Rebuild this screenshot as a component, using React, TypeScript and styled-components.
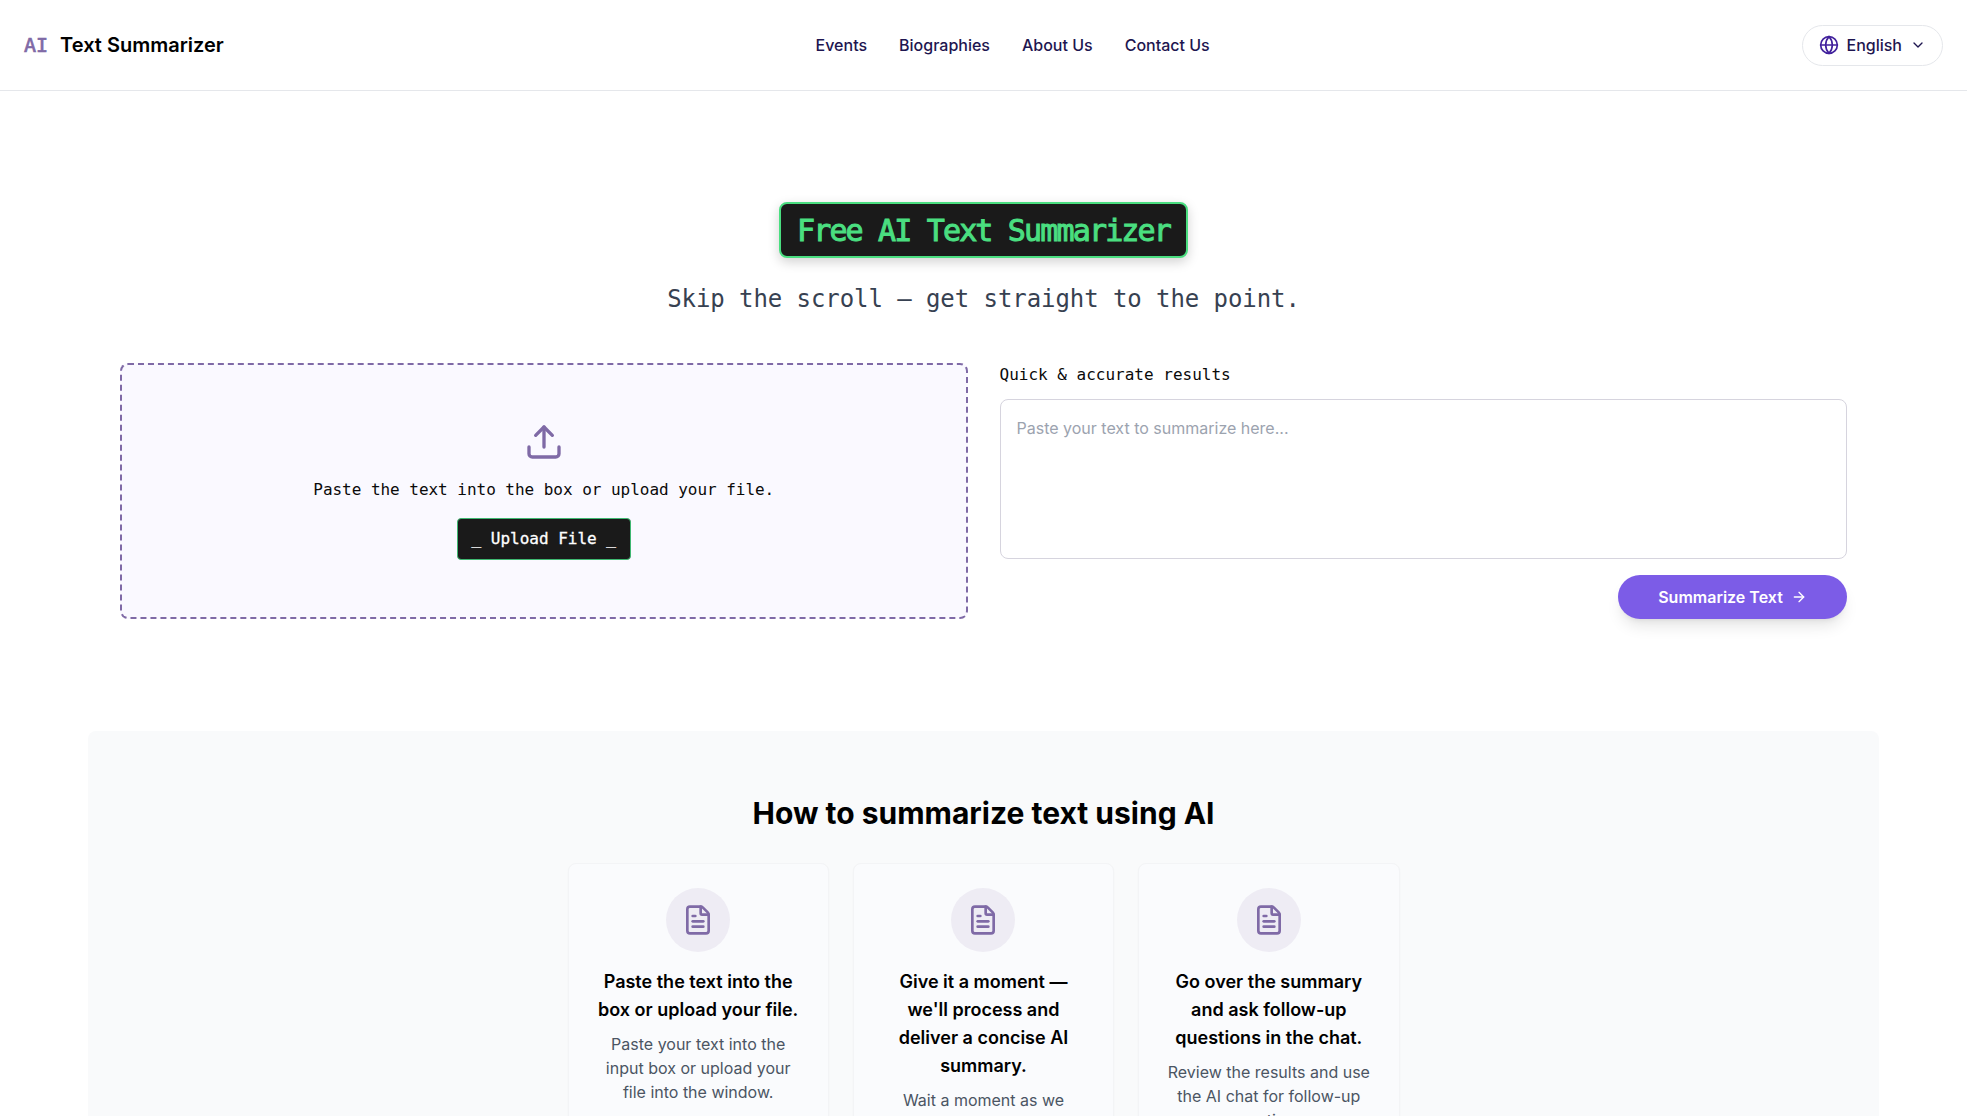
import React from "react";
import styled, { createGlobalStyle } from "styled-components";
import { ArrowRight, ChevronDown, FileText, Globe, Upload } from "lucide-react";

const sans = `Inter, "Liberation Sans", sans-serif`;
const mono = `"DejaVu Sans Mono", "Liberation Mono", monospace`;

const Global = createGlobalStyle`
  html, body { margin: 0; padding: 0; height: 100%; overflow: hidden; background: #fff; }
  * { box-sizing: border-box; }
  body { font-family: ${sans}; color: #0a0a0a; }
`;

const Page = styled.div`
  height: 1116px;
  overflow: hidden;
  background: #fff;
`;

const Header = styled.header`
  height: 91px;
  padding: 0 24px;
  display: flex;
  align-items: center;
  justify-content: space-between;
  border-bottom: 1px solid #e5e7eb;
`;

const Logo = styled.a`
  display: flex;
  align-items: center;
  gap: 12px;
`;

const LogoMark = styled.span`
  font-family: ${mono};
  font-size: 20px;
  font-weight: 400;
  -webkit-text-stroke: 0.7px #7f6aa6;
  color: #7f6aa6;
`;

const LogoText = styled.span`
  font-size: 20px;
  font-weight: 600;
  color: #000;
`;

const Nav = styled.nav`
  display: flex;
  gap: 32px;
  margin-right: 1px;
`;

const NavLink = styled.a`
  font-size: 16px;
  font-weight: 500;
  line-height: 24px;
  color: #1e1650;
`;

const LangButton = styled.button`
  display: flex;
  align-items: center;
  gap: 7px;
  height: 41px;
  padding: 0 16px;
  background: #fff;
  border: 1px solid #e5e7eb;
  border-radius: 9999px;
  font: 500 16px ${sans};
  color: #1e1650;
  svg:first-child { color: #41209c; }
  svg:last-child { margin-left: 1px; }
`;

const Main = styled.main`
  padding-top: 111px;
`;

const Hero = styled.section`
  display: flex;
  flex-direction: column;
  align-items: center;
`;

const Title = styled.h1`
  margin: 0;
  padding: 9px 16px 7px;
  background: #1a1a1a;
  border: 2px solid #4ade80;
  border-radius: 8px;
  box-shadow: 0 4px 12px rgba(0, 0, 0, 0.18);
  font-family: ${mono};
  font-size: 30px;
  font-weight: 400;
  -webkit-text-stroke: 1px #4ade80;
  line-height: 36px;
  letter-spacing: -1.84px;
  color: #4ade80;
`;

const Subtitle = styled.p`
  margin: 25px 0 48px;
  font-family: ${mono};
  font-size: 24px;
  line-height: 32px;
  letter-spacing: -0.07px;
  color: #374151;
`;

const Workspace = styled.div`
  width: 100%;
  padding: 0 120px;
  display: grid;
  grid-template-columns: 1fr 1fr;
  gap: 32px;
`;

const DropZone = styled.div`
  height: 256px;
  padding-bottom: 1px;
  display: flex;
  flex-direction: column;
  align-items: center;
  justify-content: center;
  background: #faf9ff;
  border: 2px dashed #7f6aa6;
  border-radius: 8px;
  color: #7f6aa6;
`;

const DropText = styled.p`
  margin: 16px 0;
  font-family: ${mono};
  font-size: 16px;
  line-height: 24px;
  letter-spacing: -0.03px;
  color: #0a0a0a;
`;

const UploadButton = styled.button`
  height: 42px;
  padding: 0 14px;
  background: #1a1a1a;
  border: 1px solid #3fb871;
  border-radius: 4px;
  font-family: ${mono};
  font-size: 16px;
  font-weight: 400;
  -webkit-text-stroke: 0.3px #fff;
  color: #fff;
`;

const Form = styled.div`
  display: flex;
  flex-direction: column;
  align-items: flex-end;
`;

const Label = styled.label`
  align-self: stretch;
  margin-bottom: 12px;
  font-family: ${mono};
  font-size: 16px;
  line-height: 24px;
  color: #0a0a0a;
`;

const TextArea = styled.textarea`
  display: block;
  width: 100%;
  height: 160px;
  padding: 16px;
  margin-bottom: 16px;
  resize: none;
  outline: none;
  background: #fff;
  border: 1px solid #d6d4de;
  border-radius: 8px;
  font: 400 16px/24px ${sans};
  &::placeholder { color: #9ca3af; }
`;

const SubmitButton = styled.button`
  width: 229px;
  height: 44px;
  display: flex;
  align-items: center;
  justify-content: center;
  gap: 8px;
  background: #7c5ce7;
  border: none;
  border-radius: 9999px;
  box-shadow: 0 10px 15px -3px rgba(0, 0, 0, 0.1), 0 4px 6px -4px rgba(0, 0, 0, 0.1);
  font: 600 16px ${sans};
  color: #fff;
`;

const HowTo = styled.section`
  margin: 112px 88px 0;
  padding: 64px 0;
  background: #f9fafb;
  border-radius: 8px;
`;

const HowToTitle = styled.h2`
  margin: 0 0 32px;
  text-align: center;
  font-size: 30px;
  font-weight: 700;
  line-height: 36px;
  color: #000;
`;

const Steps = styled.div`
  width: 832px;
  margin: 0 auto;
  display: grid;
  grid-template-columns: repeat(3, 1fr);
  gap: 24px;
`;

const StepCard = styled.article`
  padding: 24px;
  display: flex;
  flex-direction: column;
  align-items: center;
  text-align: center;
  background: #fafbfd;
  border: 1px solid #f3f4f6;
  border-radius: 8px;
  box-shadow: 0 1px 2px rgba(0, 0, 0, 0.03);
`;

const StepIcon = styled.div`
  width: 64px;
  height: 64px;
  display: flex;
  align-items: center;
  justify-content: center;
  margin-bottom: 16px;
  border-radius: 50%;
  background: #eeecf4;
  color: #7f6aa6;
`;

const StepTitle = styled.h3`
  margin: 0 0 8px;
  font-size: 18px;
  font-weight: 600;
  line-height: 28px;
  color: #000;
`;

const StepText = styled.p`
  margin: 0;
  font-size: 16px;
  line-height: 24px;
  color: #4b5563;
`;

const links = ["Events", "Biographies", "About Us", "Contact Us"];

const steps = [
  {
    title: "Paste the text into the box or upload your file.",
    text: "Paste your text into the input box or upload your file into the window.",
  },
  {
    title: "Give it a moment — we'll process and deliver a concise AI summary.",
    text: "Wait a moment as we process your text and create a summary.",
  },
  {
    title: "Go over the summary and ask follow-up questions in the chat.",
    text: "Review the results and use the AI chat for follow-up questions.",
  },
];

export default function App() {
  return (
    <Page>
      <Global />
      <Header>
        <Logo>
          <LogoMark>AI</LogoMark>
          <LogoText>Text Summarizer</LogoText>
        </Logo>
        <Nav>
          {links.map((l) => (
            <NavLink key={l}>{l}</NavLink>
          ))}
        </Nav>
        <LangButton>
          <Globe size={20} />
          English
          <ChevronDown size={16} />
        </LangButton>
      </Header>
      <Main>
        <Hero>
          <Title>Free AI Text Summarizer</Title>
          <Subtitle>Skip the scroll — get straight to the point.</Subtitle>
          <Workspace>
            <DropZone>
              <Upload size={40} />
              <DropText>Paste the text into the box or upload your file.</DropText>
              <UploadButton>_ Upload File _</UploadButton>
            </DropZone>
            <Form>
              <Label>Quick &amp; accurate results</Label>
              <TextArea placeholder="Paste your text to summarize here..." />
              <SubmitButton>
                Summarize Text
                <ArrowRight size={16} />
              </SubmitButton>
            </Form>
          </Workspace>
        </Hero>
        <HowTo>
          <HowToTitle>How to summarize text using AI</HowToTitle>
          <Steps>
            {steps.map((s) => (
              <StepCard key={s.title}>
                <StepIcon>
                  <FileText size={32} />
                </StepIcon>
                <StepTitle>{s.title}</StepTitle>
                <StepText>{s.text}</StepText>
              </StepCard>
            ))}
          </Steps>
        </HowTo>
      </Main>
    </Page>
  );
}
